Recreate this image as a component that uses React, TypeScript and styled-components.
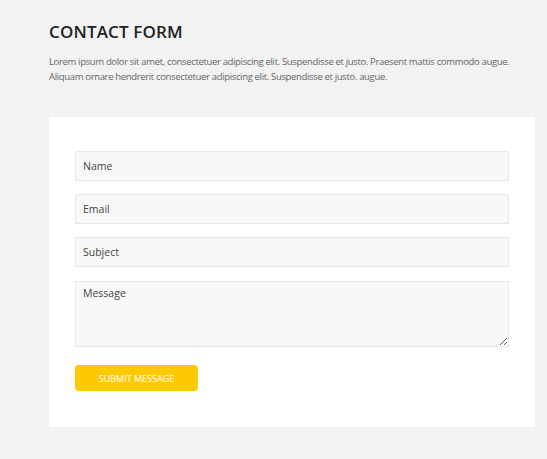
import React from "react";
import styled, { createGlobalStyle } from "styled-components";

const Global = createGlobalStyle`
  html, body { margin: 0; padding: 0; background: #f2f2f2; }
  body { font-family: "Open Sans", "Liberation Sans", sans-serif; }
  * { box-sizing: border-box; }
`;

const Page = styled.div`
  padding: 18px 12px 32px 49px;
`;

const Title = styled.h1`
  margin: 0;
  font-size: 17px;
  font-weight: 600;
  letter-spacing: 0.15px;
  line-height: 27px;
  color: #222;
`;

const Intro = styled.p`
  margin: 9px 0 0;
  font-size: 9.5px;
  letter-spacing: -0.34px;
  line-height: 15px;
  color: #666;
`;

const Card = styled.form`
  margin-top: 33px;
  background: #fff;
  padding: 34px 26px 36px;
  display: flex;
  flex-direction: column;
  gap: 13px;
`;

const Field = styled.input`
  display: block;
  width: 100%;
  height: 30px;
  border: 1px solid #e8e8e8;
  background: #f8f8f8;
  padding: 0 7px;
  font-family: inherit;
  font-size: 10.5px;
  color: #444;
  outline: none;
  &::placeholder { color: #444; }
`;

const Area = styled.textarea`
  display: block;
  width: 100%;
  height: 66px;
  margin-top: 1px;
  border: 1px solid #e8e8e8;
  background: #f8f8f8;
  padding: 4px 7px;
  font-family: inherit;
  font-size: 10.5px;
  color: #444;
  outline: none;
  resize: both;
  &::placeholder { color: #444; }
`;

const Submit = styled.button`
  margin-top: 5px;
  width: 123px;
  height: 26px;
  border: none;
  border-radius: 4px;
  background: #fdca00;
  color: #fff;
  font-family: inherit;
  font-size: 9px;
  font-weight: 400;
  text-transform: uppercase;
  cursor: pointer;
`;

export default function App() {
  return (
    <>
      <Global />
      <Page>
        <Title>CONTACT FORM</Title>
        <Intro>
          Lorem ipsum dolor sit amet, consectetuer adipiscing elit. Suspendisse et justo. Praesent mattis commodo augue.
          <br />
          Aliquam ornare hendrerit consectetuer adipiscing elit. Suspendisse et justo. augue.
        </Intro>
        <Card onSubmit={(e) => e.preventDefault()}>
          <Field placeholder="Name" />
          <Field placeholder="Email" />
          <Field placeholder="Subject" />
          <Area placeholder="Message" />
          <Submit type="submit">Submit Message</Submit>
        </Card>
      </Page>
    </>
  );
}
